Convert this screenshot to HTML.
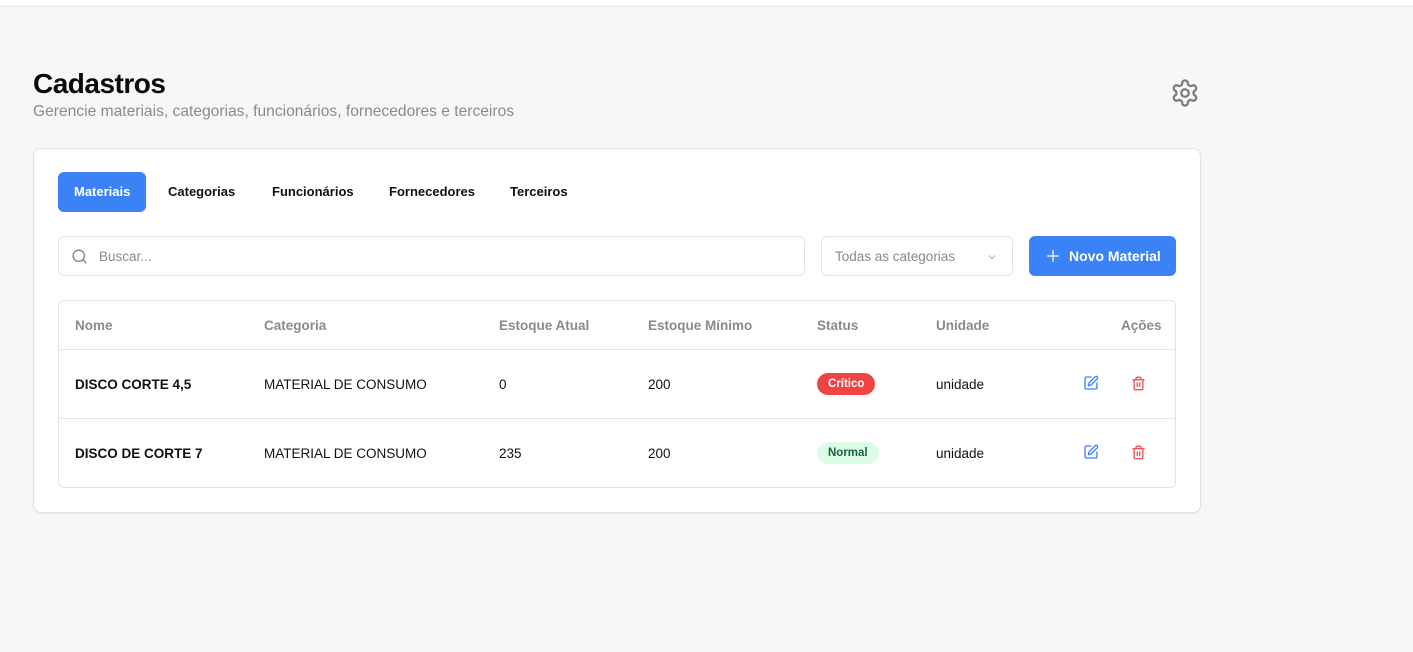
<!DOCTYPE html>
<html><head><meta charset="utf-8"><style>
*{box-sizing:border-box;margin:0;padding:0}
body{width:1413px;height:652px;background:#f7f7f7;font-family:"Liberation Sans",sans-serif;position:relative;overflow:hidden;color:#111}
.top{position:absolute;left:0;top:0;width:1413px;height:7px;background:#fff;border-bottom:1px solid #e5e5e5}
h1{position:absolute;left:33px;top:68px;font-size:28px;font-weight:bold;letter-spacing:-0.5px;color:#0a0a0a}
.sub{position:absolute;left:33px;top:103px;font-size:15.6px;color:#8a8a8a}
.gear{position:absolute;left:1170px;top:78px}
.card{position:absolute;left:33px;top:148px;width:1168px;height:365px;background:#fff;border:1px solid #e3e3e3;border-radius:8px;box-shadow:0 1px 2px rgba(0,0,0,.05)}
.tab{position:absolute;top:172px;height:40px;line-height:40px;font-size:13px;font-weight:bold;color:#111}
.tab.act{background:#3b82f6;color:#fff;border-radius:6px;padding:0 16px}
.inp{position:absolute;border:1px solid #e3e3e3;border-radius:6px;background:#fff;font-size:14px;color:#8a8a8a}
.btn{position:absolute;left:1029px;top:236px;width:147px;height:40px;background:#3b82f6;border-radius:6px;color:#fff;font-weight:bold;font-size:14px;line-height:40px}
.tbl{position:absolute;left:58px;top:300px;width:1118px;height:188px;border:1px solid #e3e3e3;border-radius:6px}
.hl{position:absolute;left:59px;width:1116px;height:1px;background:#e8e8e8}
.t{position:absolute;font-size:13.5px;color:#111}
.h{position:absolute;top:318px;font-size:13.5px;color:#8a8a8a;font-weight:600}
.b{font-weight:bold}
.pill{position:absolute;height:22px;line-height:23px;border-radius:11px;font-size:11.5px;font-weight:bold;padding:0 11px}
</style></head><body>
<div class="top"></div>
<h1>Cadastros</h1>
<div class="sub">Gerencie materiais, categorias, funcionários, fornecedores e terceiros</div>
<svg class="gear" width="30" height="30" viewBox="0 0 24 24" fill="none" stroke="#7a7a80" stroke-width="1.8" stroke-linecap="round" stroke-linejoin="round"><path d="M12.22 2h-.44a2 2 0 0 0-2 2v.18a2 2 0 0 1-1 1.73l-.43.25a2 2 0 0 1-2 0l-.15-.08a2 2 0 0 0-2.73.73l-.22.38a2 2 0 0 0 .73 2.730l.15.1a2 2 0 0 1 1 1.72v.51a2 2 0 0 1-1 1.74l-.15.09a2 2 0 0 0-.73 2.73l.22.38a2 2 0 0 0 2.73.73l.15-.08a2 2 0 0 1 2 0l.43.25a2 2 0 0 1 1 1.73V20a2 2 0 0 0 2 2h.44a2 2 0 0 0 2-2v-.18a2 2 0 0 1 1-1.73l.43-.25a2 2 0 0 1 2 0l.15.08a2 2 0 0 0 2.73-.73l.22-.39a2 2 0 0 0-.73-2.73l-.15-.08a2 2 0 0 1-1-1.74v-.5a2 2 0 0 1 1-1.74l.15-.09a2 2 0 0 0 .73-2.73l-.22-.38a2 2 0 0 0-2.73-.73l-.15.08a2 2 0 0 1-2 0l-.43-.25a2 2 0 0 1-1-1.73V4a2 2 0 0 0-2-2z"/><circle cx="12" cy="12" r="3"/></svg>
<div class="card"></div>
<div class="tab act" style="left:58px">Materiais</div>
<div class="tab" style="left:168px">Categorias</div>
<div class="tab" style="left:272px">Funcionários</div>
<div class="tab" style="left:389px">Fornecedores</div>
<div class="tab" style="left:510px">Terceiros</div>
<div class="inp" style="left:58px;top:236px;width:747px;height:40px">
<svg style="position:absolute;left:12px;top:11px" width="17" height="17" viewBox="0 0 24 24" fill="none" stroke="#888" stroke-width="2" stroke-linecap="round"><circle cx="11" cy="11" r="8"/><path d="m21 21-4.3-4.3"/></svg>
<span style="position:absolute;left:40px;top:12px;font-size:13.5px">Buscar...</span></div>
<div class="inp" style="left:821px;top:236px;width:192px;height:40px">
<span style="position:absolute;left:13px;top:12px;font-size:13.5px">Todas as categorias</span>
<svg style="position:absolute;left:164px;top:14px" width="12" height="12" viewBox="0 0 24 24" fill="none" stroke="#aaa" stroke-width="2"><path d="m6 9 6 6 6-6"/></svg></div>
<div class="btn"><svg style="position:absolute;left:17px;top:13px" width="14" height="14" viewBox="0 0 24 24" fill="none" stroke="#fff" stroke-width="2.2" stroke-linecap="round"><path d="M12 3v18M3 12h18"/></svg><span style="position:absolute;left:40px">Novo Material</span></div>
<div class="tbl"></div>
<div class="hl" style="top:349px"></div>
<div class="hl" style="top:418px"></div>
<div class="h" style="left:75px">Nome</div>
<div class="h" style="left:264px">Categoria</div>
<div class="h" style="left:499px">Estoque Atual</div>
<div class="h" style="left:648px">Estoque Mínimo</div>
<div class="h" style="left:817px">Status</div>
<div class="h" style="left:936px">Unidade</div>
<div class="h" style="left:1121px">Ações</div>
<div class="t b" style="left:75px;top:377px">DISCO CORTE 4,5</div>
<div class="t" style="left:264px;top:377px">MATERIAL DE CONSUMO</div>
<div class="t" style="left:499px;top:377px">0</div>
<div class="t" style="left:648px;top:377px">200</div>
<div class="pill" style="left:817px;top:373px;background:#ef4444;color:#fff">Crítico</div>
<div class="t" style="left:936px;top:377px">unidade</div>
<div class="t b" style="left:75px;top:446px">DISCO DE CORTE 7</div>
<div class="t" style="left:264px;top:446px">MATERIAL DE CONSUMO</div>
<div class="t" style="left:499px;top:446px">235</div>
<div class="t" style="left:648px;top:446px">200</div>
<div class="pill" style="left:817px;top:442px;background:#dcfce7;color:#166534">Normal</div>
<div class="t" style="left:936px;top:446px">unidade</div>
<svg style="position:absolute;left:1083px;top:375px" width="16" height="16" viewBox="0 0 24 24" fill="none" stroke="#3b82f6" stroke-width="2" stroke-linecap="round" stroke-linejoin="round"><path d="M12 3H5a2 2 0 0 0-2 2v14a2 2 0 0 0 2 2h14a2 2 0 0 0 2-2v-7"/><path d="M18.4 2.6a2.1 2.1 0 1 1 3 3L12 15l-4 1 1-4z"/></svg>
<svg style="position:absolute;left:1131px;top:376px" width="15" height="15" viewBox="0 0 24 24" fill="none" stroke="#ef4444" stroke-width="2" stroke-linecap="round" stroke-linejoin="round"><path d="M3 6h18M19 6v14a2 2 0 0 1-2 2H7a2 2 0 0 1-2-2V6M8 6V4a2 2 0 0 1 2-2h4a2 2 0 0 1 2 2v2M10 11v6M14 11v6"/></svg>
<svg style="position:absolute;left:1083px;top:444px" width="16" height="16" viewBox="0 0 24 24" fill="none" stroke="#3b82f6" stroke-width="2" stroke-linecap="round" stroke-linejoin="round"><path d="M12 3H5a2 2 0 0 0-2 2v14a2 2 0 0 0 2 2h14a2 2 0 0 0 2-2v-7"/><path d="M18.4 2.6a2.1 2.1 0 1 1 3 3L12 15l-4 1 1-4z"/></svg>
<svg style="position:absolute;left:1131px;top:445px" width="15" height="15" viewBox="0 0 24 24" fill="none" stroke="#ef4444" stroke-width="2" stroke-linecap="round" stroke-linejoin="round"><path d="M3 6h18M19 6v14a2 2 0 0 1-2 2H7a2 2 0 0 1-2-2V6M8 6V4a2 2 0 0 1 2-2h4a2 2 0 0 1 2 2v2M10 11v6M14 11v6"/></svg>
</body></html>
